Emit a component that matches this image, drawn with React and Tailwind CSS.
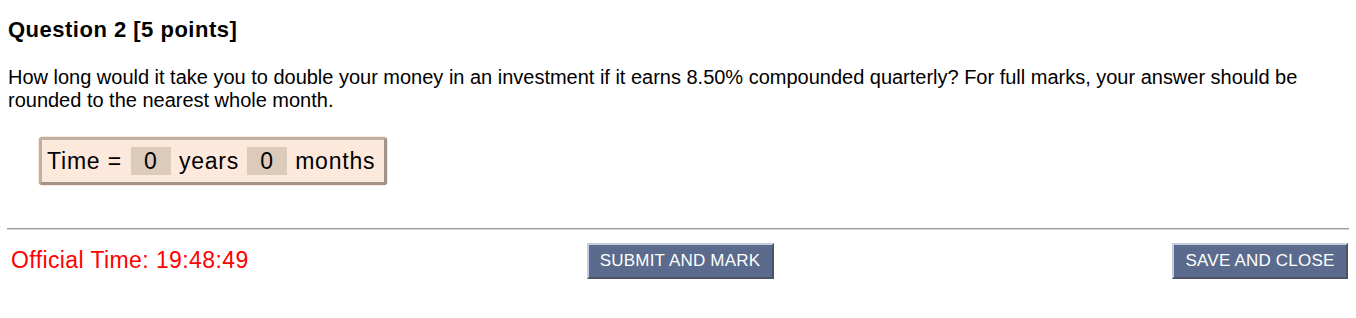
export default function App() {
  return (
    <div className="px-[7px] pt-[16px] font-['Liberation_Sans',Arial,sans-serif] text-black bg-white min-h-[318px]">
      <h2 className="text-[22px] leading-[27px] font-bold tracking-[0.5px] pl-[1px]">Question 2 [5 points]</h2>

      <p className="mt-[23px] text-[20px] leading-[23px] tracking-[-0.01px] pl-[1px]">
        How long would it take you to double your money in an investment if it earns 8.50% compounded quarterly? For full marks, your answer should be rounded to the nearest whole month.
      </p>

      <div className="mt-[24px] ml-[31px] inline-flex rounded-[5px] p-[1px] bg-[#fbe6d8]">
        <div className="flex items-center h-[48px] pl-[5px] pr-[9px] rounded-[3px] border-[3px] border-t-[#bcafa4] border-l-[#bcafa4] border-b-[#a2938a] border-r-[#a2938a] bg-[#fde9db] text-[23px] leading-none tracking-[0.8px]">
          <span>Time =</span>
          <span className="ml-[9px] w-[40px] h-[28px] flex items-center justify-center bg-[#dccabb]">0</span>
          <span className="ml-[8px]">years</span>
          <span className="ml-[8px] w-[40px] h-[28px] flex items-center justify-center bg-[#dccabb]">0</span>
          <span className="ml-[8px]">months</span>
        </div>
      </div>

      <div className="mt-[42px] border-t border-b border-t-[#9a9a9a] border-b-[#d8d8d8]" />

      <div className="mt-[13px] flex items-center">
        <div className="flex-1">
          <span className="pl-[4px] text-[23px] leading-[26px] tracking-[0.4px] text-[#ff0000]">Official Time: 19:48:49</span>
        </div>
        <button className="ml-[4px] w-[187px] h-[36px] bg-[#5a6b8d] text-white text-[17px] tracking-[0.2px] border-2 border-t-[#c3cfe0] border-l-[#c3cfe0] border-b-[#4b5464] border-r-[#4b5464]">
          SUBMIT AND MARK
        </button>
        <div className="flex-1 flex justify-end">
          <button className="mr-[1px] w-[176px] h-[36px] bg-[#5a6b8d] text-white text-[17px] tracking-[0.2px] border-2 border-t-[#c3cfe0] border-l-[#c3cfe0] border-b-[#4b5464] border-r-[#4b5464]">
            SAVE AND CLOSE
          </button>
        </div>
      </div>
    </div>
  );
}
